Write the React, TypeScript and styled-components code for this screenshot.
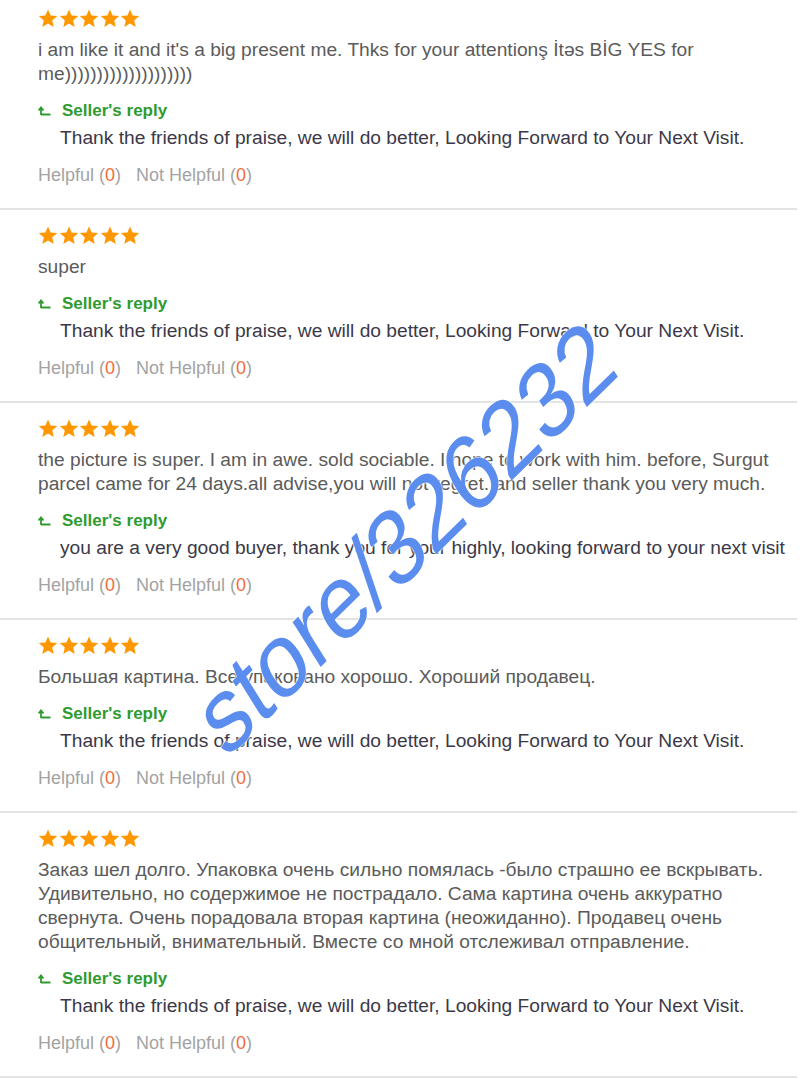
import React from "react";
import styled, { createGlobalStyle } from "styled-components";

const Global = createGlobalStyle`
  html, body { margin: 0; padding: 0; background: #fff; }
  body { font-family: "Liberation Sans", Arial, sans-serif; }
`;

const Page = styled.div`
  position: relative;
  width: 797px;
  overflow: hidden;
  background: #fff;
`;

const Review = styled.section<{ $first?: boolean }>`
  padding: ${(p) => (p.$first ? "9px" : "16px")} 7px 21px 38px;
  border-bottom: 2px solid #e3e3e3;
  display: flex;
  flex-direction: column;
`;

const Stars = styled.div`
  display: flex;
  gap: 0.5px;
  height: 19px;
  margin-bottom: 10px;
`;

const Body = styled.p`
  margin: 0 0 13px;
  font-size: 19.2px;
  line-height: 24px;
  color: #5b5b5b;
`;

const ReplyHead = styled.div`
  display: flex;
  align-items: center;
  gap: 11px;
  height: 24px;
  margin-bottom: 3px;
  color: #2f9b2f;
  font-size: 17px;
  font-weight: bold;
`;

const ReplyText = styled.p`
  margin: 0 0 13px;
  padding-left: 22px;
  font-size: 19.2px;
  line-height: 24px;
  color: #3b3948;
`;

const Votes = styled.div`
  display: flex;
  gap: 15px;
  font-size: 18px;
  line-height: 24px;
  color: #a3a3a3;
`;

const Count = styled.span`
  color: #f26a3a;
`;

const Watermark = styled.div`
  position: absolute;
  left: 405px;
  top: 537px;
  transform: translate(-50%, -50%) scaleY(1.25) rotate(-38deg);
  font-family: "Liberation Sans", Arial, sans-serif;
  font-size: 86px;
  line-height: 1;
  white-space: nowrap;
  color: #5b8def;
  text-shadow: 0 0 2px #fff, 0 0 2px #fff;
  pointer-events: none;
`;

const Star = () => (
  <svg width="20" height="19" viewBox="0 0 20 19">
    <path
      d="M10 0.6 L12.6 6.5 L19.2 7.1 L14.2 11.4 L15.7 17.9 L10 14.5 L4.3 17.9 L5.8 11.4 L0.8 7.1 L7.4 6.5 Z"
      fill="#ff9800"
    />
  </svg>
);

const ReplyIcon = () => (
  <svg width="13" height="10" viewBox="0 0 13 10">
    <path d="M3 9 L3 2 M0.5 4.5 L3 1.5 L5.5 4.5 M3 8.5 L12.5 8.5" stroke="#2f9b2f" strokeWidth="1.8" fill="none" />
  </svg>
);

const reviews = [
  {
    text: "i am like it and it's a big present me. Thks for your attentionş İtəs BİG YES for me))))))))))))))))))))",
    reply: "Thank the friends of praise, we will do better, Looking Forward to Your Next Visit.",
  },
  {
    text: "super",
    reply: "Thank the friends of praise, we will do better, Looking Forward to Your Next Visit.",
  },
  {
    text: "the picture is super. I am in awe. sold sociable. I hope to work with him. before, Surgut parcel came for 24 days.all advise,you will not regret. and seller thank you very much.",
    reply: "you are a very good buyer, thank you for your highly, looking forward to your next visit",
  },
  {
    text: "Большая картина. Все упаковано хорошо. Хороший продавец.",
    reply: "Thank the friends of praise, we will do better, Looking Forward to Your Next Visit.",
  },
  {
    text: "Заказ шел долго. Упаковка очень сильно помялась -было страшно ее вскрывать. Удивительно, но содержимое не пострадало. Сама картина очень аккуратно свернута. Очень порадовала вторая картина (неожиданно). Продавец очень общительный, внимательный. Вместе со мной отслеживал отправление.",
    reply: "Thank the friends of praise, we will do better, Looking Forward to Your Next Visit.",
  },
];

export default function App() {
  return (
    <Page>
      <Global />
      {reviews.map((r, i) => (
        <Review key={i} $first={i === 0}>
          <Stars>
            {[0, 1, 2, 3, 4].map((s) => (
              <Star key={s} />
            ))}
          </Stars>
          <Body>{r.text}</Body>
          <ReplyHead>
            <ReplyIcon />
            <span>Seller's reply</span>
          </ReplyHead>
          <ReplyText>{r.reply}</ReplyText>
          <Votes>
            <span>
              Helpful (<Count>0</Count>)
            </span>
            <span>
              Not Helpful (<Count>0</Count>)
            </span>
          </Votes>
        </Review>
      ))}
      <Watermark>store/326232</Watermark>
    </Page>
  );
}
